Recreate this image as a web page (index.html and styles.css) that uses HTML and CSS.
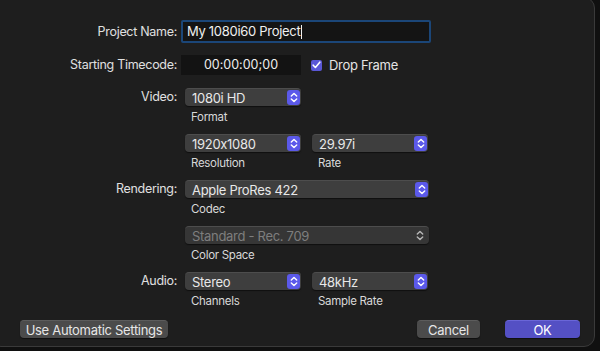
FILE: index.html
```html
<!DOCTYPE html>
<html lang="en">
<head>
    <meta charset="UTF-8">
    <title>Project Settings</title>
    <link rel="stylesheet" href="styles.css">
</head>
<body>
    <div class="dialog">
        <div class="form">
            <div class="label row-name">Project Name:</div>
            <div class="row-name"><div class="text-input">My 1080i60 Project<span class="caret"></span></div></div>

            <div class="label row-tc">Starting Timecode:</div>
            <div class="row-tc tc-line">
                <div class="timecode">00:00:00;00</div>
                <label class="check"><span class="box"><svg width="9" height="8" viewBox="0 0 9 8"><path d="M1.2 4.2 L3.4 6.5 L7.8 1.2" fill="none" stroke="#fff" stroke-width="1.6" stroke-linecap="round" stroke-linejoin="round"/></svg></span>Drop Frame</label>
            </div>

            <div class="label row-pop">Video:</div>
            <div class="field">
                <div class="popup w-small"><span>1080i HD</span><span class="stepper"></span></div>
                <div class="sub">Format</div>
            </div>

            <div class="label row-pop"></div>
            <div class="field pair">
                <div>
                    <div class="popup w-small"><span>1920x1080</span><span class="stepper"></span></div>
                    <div class="sub">Resolution</div>
                </div>
                <div>
                    <div class="popup w-small"><span>29.97i</span><span class="stepper"></span></div>
                    <div class="sub">Rate</div>
                </div>
            </div>

            <div class="label row-pop">Rendering:</div>
            <div class="field">
                <div class="popup w-wide"><span>Apple ProRes 422</span><span class="stepper"></span></div>
                <div class="sub">Codec</div>
            </div>

            <div class="label row-pop"></div>
            <div class="field">
                <div class="popup w-wide disabled"><span>Standard - Rec. 709</span><span class="stepper plain"></span></div>
                <div class="sub">Color Space</div>
            </div>

            <div class="label row-pop">Audio:</div>
            <div class="field pair">
                <div>
                    <div class="popup w-small"><span>Stereo</span><span class="stepper"></span></div>
                    <div class="sub">Channels</div>
                </div>
                <div>
                    <div class="popup w-small"><span>48kHz</span><span class="stepper"></span></div>
                    <div class="sub">Sample Rate</div>
                </div>
            </div>
        </div>

        <div class="buttons">
            <button class="btn auto">Use Automatic Settings</button>
            <div class="spacer"></div>
            <button class="btn cancel">Cancel</button>
            <button class="btn ok">OK</button>
        </div>
    </div>

    <script>
        // stepper chevrons drawn once and copied into every popup
        const chevrons = '<svg width="8" height="11" viewBox="0 0 8 11"><path d="M1.3 4 L4 1.4 L6.7 4 M1.3 7 L4 9.6 L6.7 7" fill="none" stroke="currentColor" stroke-width="1.4" stroke-linecap="round" stroke-linejoin="round"/></svg>';
        document.querySelectorAll('.stepper').forEach(s => s.innerHTML = chevrons);
    </script>
</body>
</html>
```

FILE: styles.css
```css
body {
    margin: 0;
    background-color: #101010;
    font-family: Inter, "Noto Sans", sans-serif;
    font-size: 12.5px;
    letter-spacing: -0.3px;
    font-feature-settings: "calt" 0;
    color: #dedede;
    overflow: hidden;
}

.dialog {
    margin: -3px 0 0 -10px;
    width: 605px;
    height: 350px;
    box-sizing: border-box;
    background-color: #1e1e1e;
    border: 1px solid #3a3a3a;
    border-radius: 11px;
    padding-top: 22px;
}

.form {
    display: grid;
    grid-template-columns: 186px 260px;
    column-gap: 4px;
    align-items: start;
}

.label {
    text-align: right;
    color: #e0e0e0;
}

.row-name {
    height: 35px;
    line-height: 23px;
}

.text-input {
    width: 250px;
    height: 23px;
    box-sizing: border-box;
    border: 2px solid #1b4678;
    border-radius: 2px;
    background-color: #141414;
    padding-left: 4px;
    line-height: 19px;
    color: #f0f0f0;
    font-size: 13px;
}

.caret {
    display: inline-block;
    width: 1px;
    height: 14px;
    background-color: #f0f0f0;
    vertical-align: -3px;
    margin-left: 1px;
}

.row-tc {
    height: 33px;
    line-height: 20px;
}

.tc-line {
    display: flex;
    align-items: center;
    height: 20px;
}

.timecode {
    width: 120px;
    height: 20px;
    background-color: #131313;
    text-align: center;
    line-height: 20px;
    font-size: 12.5px;
    color: #eeeeee;
    letter-spacing: 0;
}

.check {
    display: flex;
    align-items: center;
    margin-left: 10px;
    font-size: 13px;
    color: #e4e4e4;
}

.check .box {
    width: 11px;
    height: 11px;
    border-radius: 2px;
    background-color: #5a57d6;
    display: flex;
    align-items: center;
    justify-content: center;
    margin-right: 7px;
}

.row-pop {
    line-height: 18px;
    height: 46px;
}

.field {
    height: 46px;
    padding-left: 4px;
}

.pair {
    display: flex;
    gap: 11px;
}

.popup {
    height: 18px;
    box-sizing: border-box;
    background-color: #3e3e3e;
    border-top: 1px solid #4d4d4d;
    border-radius: 4px;
    box-shadow: 0 1px 1px rgba(0, 0, 0, 0.5);
    display: flex;
    align-items: center;
    justify-content: space-between;
    padding: 0 1px 0 7px;
    font-size: 13px;
    color: #e8e8e8;
}

.w-small {
    width: 116px;
}

.w-wide {
    width: 244px;
}

.stepper {
    width: 13px;
    height: 15px;
    border-radius: 3px;
    background-color: #5b59ea;
    color: #ffffff;
    display: flex;
    align-items: center;
    justify-content: center;
}

.stepper.plain {
    background: none;
    color: #b8b8b8;
    margin-right: 2px;
}

.popup.disabled {
    background-color: #363636;
    color: #7e7e7e;
}

.sub {
    margin: 4px 0 0 6px;
    font-size: 11.5px;
    color: #d8d8d8;
    line-height: 14px;
}

.buttons {
    display: flex;
    align-items: center;
    padding: 0 14px 0 29px;
    margin-top: 2px;
}

.spacer {
    flex: 1;
}

.btn {
    height: 18px;
    border: none;
    border-top: 1px solid #5c5c5c;
    border-radius: 4px;
    background-color: #4b4b4b;
    color: #e6e6e6;
    font-family: Inter, "Noto Sans", sans-serif;
    font-size: 13px;
    letter-spacing: -0.3px;
    font-feature-settings: "calt" 0;
    padding: 0;
    line-height: 16px;
    box-shadow: 0 1px 1px rgba(0, 0, 0, 0.5);
}

.auto {
    width: 148px;
}

.cancel {
    width: 63px;
}

.ok {
    width: 75px;
    margin-left: 25px;
    background-color: #5450c4;
    border-top-color: #6a66d8;
    color: #ffffff;
}
```
